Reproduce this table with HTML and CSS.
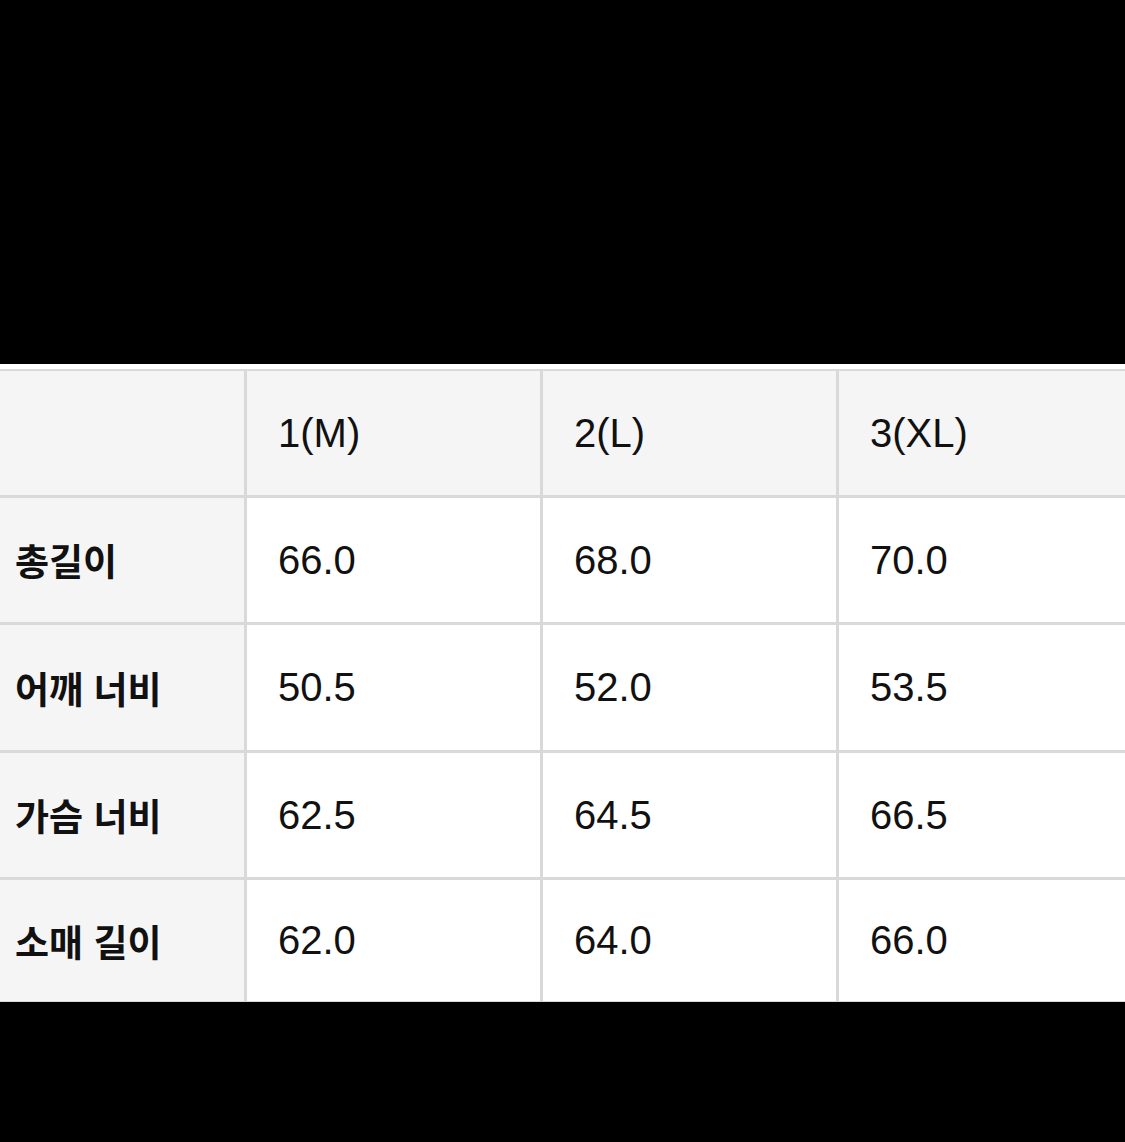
FILE: index.html
```html
<!DOCTYPE html>
<html lang="ko">
<head>
<meta charset="utf-8">
<link rel="stylesheet" href="styles.css">
</head>
<body>
<div class="sheet">
  <div class="size-table">
    <div class="cell head"></div>
    <div class="cell head num">1(M)</div>
    <div class="cell head num">2(L)</div>
    <div class="cell head num">3(XL)</div>

    <div class="cell label">총길이</div>
    <div class="cell num">66.0</div>
    <div class="cell num">68.0</div>
    <div class="cell num">70.0</div>

    <div class="cell label">어깨 너비</div>
    <div class="cell num">50.5</div>
    <div class="cell num">52.0</div>
    <div class="cell num">53.5</div>

    <div class="cell label">가슴 너비</div>
    <div class="cell num">62.5</div>
    <div class="cell num">64.5</div>
    <div class="cell num">66.5</div>

    <div class="cell label">소매 길이</div>
    <div class="cell num">62.0</div>
    <div class="cell num">64.0</div>
    <div class="cell num">66.0</div>
  </div>
</div>
</body>
</html>
```

FILE: styles.css
```css
html, body {
  margin: 0;
  padding: 0;
  background: #000;
  width: 1125px;
  height: 1142px;
  overflow: hidden;
}

.sheet {
  margin-top: 364px;
  background: #fff;
  padding-top: 5px;
  width: 1125px;
  overflow: hidden;
}

.size-table {
  display: grid;
  grid-template-columns: 244px 293px 293px 293px;
  grid-template-rows: 124px 124px 125px 124px 121px;
  gap: 3px;
  padding-top: 2px;
  padding-bottom: 1px;
  background: #d9d9d9;
  width: 1132px;
}

.cell {
  display: flex;
  align-items: center;
  background: #fff;
  color: #111;
}

.head {
  background: #f5f5f5;
}

.label {
  background: #f5f5f5;
  padding-left: 15px;
  font-family: "Noto Sans CJK KR", sans-serif;
  font-weight: 700;
  font-size: 37px;
}

.num {
  padding-left: 31px;
  font-family: "Liberation Sans", Arial, sans-serif;
  font-size: 40px;
}
```
